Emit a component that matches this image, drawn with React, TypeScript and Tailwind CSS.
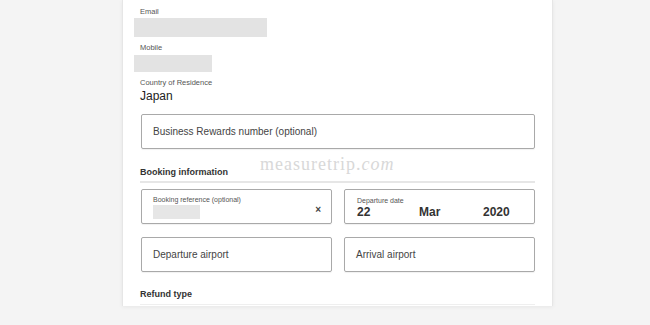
export default function App() {
  const font = "font-['Liberation_Sans',Arial,sans-serif]";
  return (
    <div className={`w-[650px] h-[325px] bg-[#f4f4f4] overflow-hidden flex ${font}`}>
      <div className="relative ml-[122px] w-[431px] h-[306px] bg-white border-x border-[#e6e6e6] shadow-[0_1px_4px_rgba(0,0,0,0.06)] px-[17px] pt-[7px]">
        {/* Watermark */}
        <div className="absolute left-[137px] top-[151px] font-['Liberation_Serif',serif] text-[18px] tracking-[1px] text-[#d8d8d8] select-none">
          measuretrip.<span className="italic">com</span>
        </div>

        {/* Contact details */}
        <div className="text-[7.5px] leading-[10px] text-[#555]">Email</div>
        <div className="ml-[-6px] mt-[1px] w-[133px] h-[19px] bg-[#e3e3e3]" />
        <div className="mt-[6px] text-[7.5px] leading-[10px] text-[#555]">Mobile</div>
        <div className="ml-[-6px] mt-[2px] w-[78px] h-[17px] bg-[#e3e3e3]" />
        <div className="mt-[6px] text-[7.5px] leading-[10px] text-[#555]">Country of Residence</div>
        <div className="mt-[1px] text-[12px] leading-[14px] text-[#222]">Japan</div>

        <div className="mt-[11px] ml-[1px] w-[394px] h-[35px] border border-[#a9a9a9] rounded-[2px] shadow-[0_1px_1px_rgba(0,0,0,0.06)] flex items-center px-[11px] text-[10px] text-[#444]">
          Business Rewards number (optional)
        </div>

        {/* Booking information */}
        <div className="mt-[18px] text-[9px] leading-[10px] font-bold text-[#333]">Booking information</div>
        <div className="mt-[4px] h-[2px] bg-[#e6e6e6]" />

        <div className="mt-[6px] ml-[1px] flex gap-[12px]">
          <div className="relative w-[191px] h-[35px] border border-[#a9a9a9] rounded-[2px] shadow-[0_1px_1px_rgba(0,0,0,0.06)] px-[11px] pt-[5px]">
            <div className="text-[7px] leading-[9px] text-[#555]">Booking reference (optional)</div>
            <div className="mt-[1px] w-[47px] h-[14px] bg-[#e6e6e6]" />
            <span className="absolute right-[10px] top-[12px] text-[10px] font-bold text-[#444]">×</span>
          </div>
          <div className="w-[191px] h-[35px] border border-[#a9a9a9] rounded-[2px] shadow-[0_1px_1px_rgba(0,0,0,0.06)] px-[12px] pt-[6px]">
            <div className="text-[7px] leading-[9px] text-[#555]">Departure date</div>
            <div className="flex text-[12px] leading-[14px] font-semibold text-[#333]">
              <span className="w-[62px]">22</span>
              <span className="w-[64px]">Mar</span>
              <span>2020</span>
            </div>
          </div>
        </div>

        <div className="mt-[13px] ml-[1px] flex gap-[12px]">
          <div className="w-[191px] h-[35px] border border-[#a9a9a9] rounded-[2px] shadow-[0_1px_1px_rgba(0,0,0,0.06)] flex items-center px-[11px] text-[10px] text-[#444]">
            Departure airport
          </div>
          <div className="w-[191px] h-[35px] border border-[#a9a9a9] rounded-[2px] shadow-[0_1px_1px_rgba(0,0,0,0.06)] flex items-center px-[11px] text-[10px] text-[#444]">
            Arrival airport
          </div>
        </div>

        {/* Refund type */}
        <div className="mt-[17px] text-[9px] leading-[10px] font-bold text-[#333]">Refund type</div>
        <div className="mt-[5px] h-px bg-[#efefef]" />
      </div>
    </div>
  );
}
